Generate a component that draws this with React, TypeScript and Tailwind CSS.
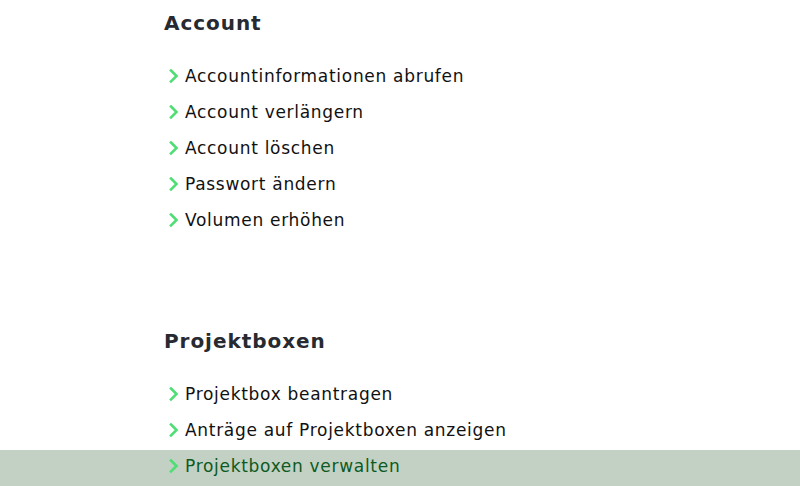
import React from "react";

type Item = { label: string; active?: boolean };

const sections: { title: string; items: Item[] }[] = [
  {
    title: "Account",
    items: [
      { label: "Accountinformationen abrufen" },
      { label: "Account verlängern" },
      { label: "Account löschen" },
      { label: "Passwort ändern" },
      { label: "Volumen erhöhen" },
    ],
  },
  {
    title: "Projektboxen",
    items: [
      { label: "Projektbox beantragen" },
      { label: "Anträge auf Projektboxen anzeigen" },
      { label: "Projektboxen verwalten", active: true },
    ],
  },
];

function Chevron() {
  return (
    <svg width="12" height="16" viewBox="0 0 12 16" className="shrink-0">
      <path d="M3 2.5 L8.5 8 L3 13.5" fill="none" stroke="#4fde74" strokeWidth="2.6" strokeLinecap="square" />
    </svg>
  );
}

export default function App() {
  return (
    <div className="w-[800px] h-[486px] overflow-hidden bg-white" style={{ fontFamily: '"DejaVu Sans", "Noto Sans", sans-serif' }}>
      {sections.map((s, i) => (
        <section key={s.title} className={i === 0 ? "pt-[9px]" : "pt-[87px]"}>
          <div className="w-[472px] mx-auto">
            <h2 className="text-[20px] leading-[28px] font-bold text-[#272a30] tracking-[0.95px]">{s.title}</h2>
          </div>
          <ul className="mt-[23px]">
            {s.items.map((it) => (
              <li key={it.label} className={it.active ? "bg-[#c2d1c3]" : ""}>
                <a href="#" className="w-[472px] mx-auto h-[36px] pb-[5px] flex items-center gap-[5px] pl-[4px]">
                  <Chevron />
                  <span className={"text-[17px] leading-[20px] tracking-[0.7px] " + (it.active ? "text-[#0d5a22]" : "text-[#111111]")}>
                    {it.label}
                  </span>
                </a>
              </li>
            ))}
          </ul>
        </section>
      ))}
    </div>
  );
}
